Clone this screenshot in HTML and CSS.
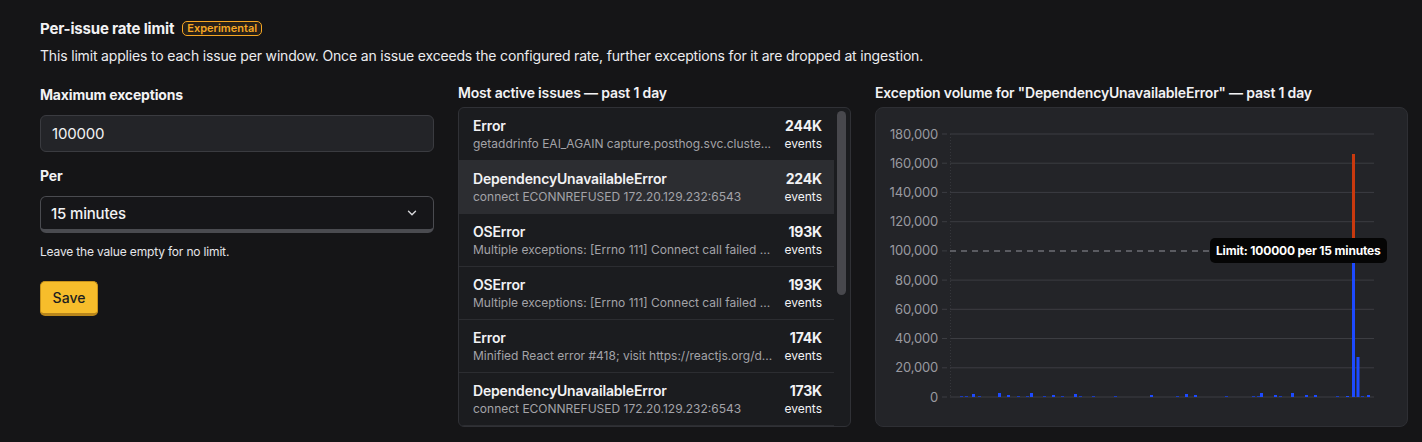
FILE: index.html
```html
<!DOCTYPE html>
<html lang="en">
<head>
  <meta charset="UTF-8">
  <meta name="viewport" content="width=device-width, initial-scale=1.0">
  <title>Per-issue rate limit</title>
  <link rel="stylesheet" href="styles.css">
</head>
<body>

<div class="page">
  <div class="heading">
    <h2>Per-issue rate limit</h2>
    <span class="badge">Experimental</span>
  </div>
  <p class="desc">This limit applies to each issue per window. Once an issue exceeds the configured rate, further exceptions for it are dropped at ingestion.</p>

  <div class="columns">
    <div class="form">
      <label class="field-label">Maximum exceptions</label>
      <div class="input">100000</div>

      <label class="field-label">Per</label>
      <div class="select">
        <span>15 minutes</span>
        <svg width="14" height="14" viewBox="0 0 16 16"><path d="M4 6l4 4 4-4" fill="none" stroke="#d8d8dc" stroke-width="1.6" stroke-linecap="round" stroke-linejoin="round"/></svg>
      </div>

      <p class="help">Leave the value empty for no limit.</p>
      <button class="save">Save</button>
    </div>

    <div class="issues">
      <h3>Most active issues — past 1 day</h3>
      <div class="list">
        <div class="rows">
          <div class="row">
            <div class="info"><div class="name">Error</div><div class="msg">getaddrinfo EAI_AGAIN capture.posthog.svc.cluste...</div></div>
            <div class="count"><b>244K</b><span>events</span></div>
          </div>
          <div class="row active">
            <div class="info"><div class="name">DependencyUnavailableError</div><div class="msg">connect ECONNREFUSED 172.20.129.232:6543</div></div>
            <div class="count"><b>224K</b><span>events</span></div>
          </div>
          <div class="row">
            <div class="info"><div class="name">OSError</div><div class="msg">Multiple exceptions: [Errno 111] Connect call failed ...</div></div>
            <div class="count"><b>193K</b><span>events</span></div>
          </div>
          <div class="row">
            <div class="info"><div class="name">OSError</div><div class="msg">Multiple exceptions: [Errno 111] Connect call failed ...</div></div>
            <div class="count"><b>193K</b><span>events</span></div>
          </div>
          <div class="row">
            <div class="info"><div class="name">Error</div><div class="msg">Minified React error #418; visit https://reactjs.org/d...</div></div>
            <div class="count"><b>174K</b><span>events</span></div>
          </div>
          <div class="row">
            <div class="info"><div class="name">DependencyUnavailableError</div><div class="msg">connect ECONNREFUSED 172.20.129.232:6543</div></div>
            <div class="count"><b>173K</b><span>events</span></div>
          </div>
        </div>
        <div class="scrollbar"><div class="thumb"></div></div>
      </div>
    </div>

    <div class="volume">
      <h3>Exception volume for "DependencyUnavailableError" — past 1 day</h3>
      <div class="chart">
        <svg width="531" height="318" viewBox="0 0 531 318">
          <g class="grid">
            <line x1="74" y1="26" x2="498" y2="26"/>
            <line x1="74" y1="55.2" x2="498" y2="55.2"/>
            <line x1="74" y1="84.4" x2="498" y2="84.4"/>
            <line x1="74" y1="113.7" x2="498" y2="113.7"/>
            <line x1="74" y1="172.1" x2="498" y2="172.1"/>
            <line x1="74" y1="201.3" x2="498" y2="201.3"/>
            <line x1="74" y1="230.5" x2="498" y2="230.5"/>
            <line x1="74" y1="259.8" x2="498" y2="259.8"/>
            <line x1="74" y1="289" x2="498" y2="289"/>
          </g>
          <g class="ticks">
            <line x1="66" y1="26" x2="71" y2="26"/>
            <line x1="66" y1="55.2" x2="71" y2="55.2"/>
            <line x1="66" y1="84.4" x2="71" y2="84.4"/>
            <line x1="66" y1="113.7" x2="71" y2="113.7"/>
            <line x1="66" y1="142.9" x2="71" y2="142.9"/>
            <line x1="66" y1="172.1" x2="71" y2="172.1"/>
            <line x1="66" y1="201.3" x2="71" y2="201.3"/>
            <line x1="66" y1="230.5" x2="71" y2="230.5"/>
            <line x1="66" y1="259.8" x2="71" y2="259.8"/>
            <line x1="66" y1="289" x2="71" y2="289"/>
          </g>
          <line class="axis" x1="74.5" y1="26" x2="74.5" y2="289"/>
          <g class="labels">
            <text x="62" y="30.5">180,000</text>
            <text x="62" y="59.7">160,000</text>
            <text x="62" y="88.9">140,000</text>
            <text x="62" y="118.2">120,000</text>
            <text x="62" y="147.4">100,000</text>
            <text x="62" y="176.6">80,000</text>
            <text x="62" y="205.8">60,000</text>
            <text x="62" y="235">40,000</text>
            <text x="62" y="264.3">20,000</text>
            <text x="62" y="293.5">0</text>
          </g>
          <g class="noise">
            <rect x="84" y="288" width="3" height="1"/>
            <rect x="89" y="288" width="3" height="1"/>
            <rect x="102" y="288" width="3" height="1"/>
            <rect x="141" y="288" width="3" height="1"/>
            <rect x="150" y="288" width="3" height="1"/>
            <rect x="167" y="288" width="3" height="1"/>
            <rect x="185" y="288" width="3" height="1"/>
            <rect x="203" y="288" width="3" height="1"/>
            <rect x="216" y="288" width="3" height="1"/>
            <rect x="238" y="288" width="3" height="1"/>
            <rect x="300" y="288" width="3" height="1"/>
            <rect x="349" y="288" width="3" height="1"/>
            <rect x="376" y="288" width="3" height="1"/>
            <rect x="381" y="288" width="3" height="1"/>
            <rect x="403" y="288" width="3" height="1"/>
            <rect x="460" y="288" width="3" height="1"/>
            <rect x="485" y="288" width="3" height="1"/>
          </g>
          <g class="bars">
            <rect x="96" y="286" width="3" height="3"/>
            <rect x="122" y="285" width="3" height="4"/>
            <rect x="131" y="287" width="3" height="2"/>
            <rect x="154" y="285" width="3" height="4"/>
            <rect x="176" y="287" width="3" height="2"/>
            <rect x="198" y="286" width="3" height="3"/>
            <rect x="274" y="287" width="3" height="2"/>
            <rect x="309" y="286" width="3" height="3"/>
            <rect x="318" y="287" width="3" height="2"/>
            <rect x="384" y="285" width="3" height="4"/>
            <rect x="398" y="287" width="3" height="2"/>
            <rect x="415" y="285" width="3" height="4"/>
            <rect x="429" y="287" width="3" height="2"/>
            <rect x="438" y="287" width="3" height="2"/>
            <rect x="470" y="288" width="3" height="1"/>
            <rect x="476" y="142.9" width="3" height="146.1"/>
            <rect x="480.5" y="249" width="3" height="40"/>
            <rect x="491" y="287" width="3" height="2"/>
          </g>
          <rect class="over" x="476" y="46" width="3" height="96.9"/>
          <line class="limit" x1="74" y1="142.9" x2="498" y2="142.9"/>
        </svg>
        <div class="tooltip">Limit: 100000 per 15 minutes</div>
      </div>
    </div>
  </div>
</div>

</body>
</html>
```

FILE: styles.css
```css
body {
  margin: 0;
  background-color: #151517;
  color: #f2f2f4;
  font-family: Inter, "Noto Sans", sans-serif;
  letter-spacing: -0.17px;
}

.page {
  padding: 18px 14px 0 40px;
}

.heading {
  display: flex;
  align-items: center;
  gap: 8px;
  height: 20px;
}

.heading h2 {
  margin: 0;
  font-size: 15px;
  font-weight: 700;
}

.badge {
  font-size: 11px;
  font-weight: 600;
  line-height: 13px;
  letter-spacing: 0;
  color: #f5a623;
  border: 1px solid #f5a623;
  border-radius: 5px;
  padding: 0 4px;
  background-color: rgba(245, 166, 35, 0.08);
}

.desc {
  margin: 8px 0 0;
  font-size: 14px;
  line-height: 20px;
  color: #ececef;
}

.columns {
  display: grid;
  grid-template-columns: 394px 393px 533px;
  gap: 24px;
  margin-top: 19px;
}

.form {
  display: flex;
  flex-direction: column;
  align-items: flex-start;
}

.field-label {
  font-size: 14px;
  font-weight: 700;
  line-height: 20px;
  margin-bottom: 10px;
}

.input {
  box-sizing: border-box;
  width: 100%;
  height: 37px;
  padding: 0 11px;
  display: flex;
  align-items: center;
  font-size: 15px;
  background-color: #232428;
  border: 1px solid #3a3b40;
  border-radius: 6px;
  margin-bottom: 14px;
}

.select {
  box-sizing: border-box;
  width: 100%;
  height: 37px;
  padding: 0 14px 0 10px;
  display: flex;
  align-items: center;
  justify-content: space-between;
  font-size: 15px;
  font-weight: 500;
  background-color: #161619;
  border: 1px solid #4a4b50;
  border-bottom-width: 4px;
  border-radius: 6px;
}

.help {
  margin: 11px 0 0;
  font-size: 12px;
  line-height: 16px;
  color: #e6e6ea;
}

.save {
  margin-top: 21px;
  width: 58px;
  height: 35px;
  padding: 0;
  font-family: inherit;
  font-size: 14px;
  font-weight: 500;
  color: #1d1d1f;
  background-color: #f7bd2b;
  border: 1px solid #c8921a;
  border-bottom: 3px solid #b9861b;
  border-radius: 5px;
  cursor: pointer;
}

.issues h3,
.volume h3 {
  margin: -2px 0 4px;
  font-size: 14px;
  font-weight: 600;
  line-height: 20px;
}

.list {
  display: flex;
  height: 320px;
  box-sizing: border-box;
  border: 1px solid #303136;
  border-radius: 6px;
  background-color: #1b1c1f;
  overflow: hidden;
}

.rows {
  flex: 1;
  min-width: 0;
}

.row {
  display: flex;
  justify-content: space-between;
  align-items: center;
  height: 53px;
  box-sizing: border-box;
  padding: 0 12px 0 14px;
  border-bottom: 1px solid #2c2d31;
}

.row.active {
  background-color: #2c2d31;
}

.info {
  min-width: 0;
  flex: 1;
  margin-right: 12px;
}

.name {
  font-size: 14px;
  font-weight: 600;
  line-height: 18px;
}

.msg {
  font-size: 12px;
  line-height: 17px;
  letter-spacing: 0;
  color: #a3a3a8;
  white-space: nowrap;
  overflow: hidden;
  text-overflow: ellipsis;
}

.count {
  display: flex;
  flex-direction: column;
  align-items: flex-end;
}

.count b {
  font-size: 14px;
  font-weight: 700;
  line-height: 18px;
}

.count span {
  font-size: 12px;
  line-height: 17px;
  letter-spacing: 0;
}

.scrollbar {
  width: 16px;
  padding: 3px 0 0 3px;
  box-sizing: border-box;
}

.thumb {
  width: 9px;
  height: 184px;
  border-radius: 5px;
  background-color: #48484d;
}

.chart {
  position: relative;
  height: 320px;
  box-sizing: border-box;
  border: 1px solid #2e2f34;
  border-radius: 8px;
  background-color: #232428;
}

.chart svg {
  display: block;
}

.grid line,
.ticks line {
  stroke: #3c3d42;
  stroke-width: 1;
}

.axis {
  stroke: #35363b;
  stroke-width: 1;
  stroke-dasharray: 1 2;
}

.labels text {
  font-family: Inter, "Noto Sans", sans-serif;
  font-size: 13px;
  fill: #9a9aa0;
  text-anchor: end;
}

.noise rect {
  fill: #1a3bbf;
}

.bars rect {
  fill: #1d4aff;
}

.over {
  fill: #c9390e;
}

.limit {
  stroke: #6e6e74;
  stroke-width: 1.5;
  stroke-dasharray: 6 5;
}

.tooltip {
  position: absolute;
  left: 334px;
  top: 130px;
  padding: 0 6px;
  height: 25px;
  line-height: 25px;
  font-size: 12px;
  font-weight: 700;
  color: #ffffff;
  background-color: #050505;
  border-radius: 5px;
  white-space: nowrap;
}
```
